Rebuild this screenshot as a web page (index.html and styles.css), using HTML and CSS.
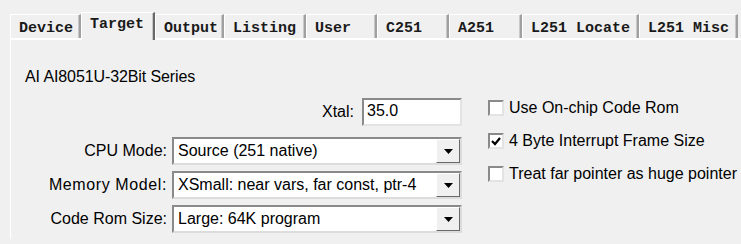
FILE: index.html
```html
<!DOCTYPE html>
<html lang="en">
<head>
    <meta charset="UTF-8">
    <meta name="viewport" content="width=device-width, initial-scale=1.0">
    <title>Options for Target</title>
    <link rel="stylesheet" href="styles.css">
</head>
<body>
    <div class="tabs">
        <div class="tab w-device">Device</div>
        <div class="tab tab-active w-target">Target</div>
        <div class="tab w-output">Output</div>
        <div class="tab w-listing">Listing</div>
        <div class="tab w-user">User</div>
        <div class="tab w-c251">C251</div>
        <div class="tab w-a251">A251</div>
        <div class="tab w-locate">L251 Locate</div>
        <div class="tab w-misc">L251 Misc</div>
    </div>

    <div class="panel">
        <div class="series">AI AI8051U-32Bit Series</div>

        <div class="panel-body">
            <div class="form">
                <div class="xtal-row">
                    <label class="field-label">Xtal:</label>
                    <div class="edit">35.0</div>
                </div>

                <div class="field-row">
                    <label class="field-label">CPU Mode:</label>
                    <div class="combo">
                        <span class="combo-text">Source (251 native)</span>
                        <span class="combo-btn"><svg width="9" height="5" viewBox="0 0 9 5"><path d="M0 0h9L4.5 5z" fill="#000"/></svg></span>
                    </div>
                </div>

                <div class="field-row">
                    <label class="field-label wide">Memory Model:</label>
                    <div class="combo">
                        <span class="combo-text">XSmall: near vars, far const, ptr-4</span>
                        <span class="combo-btn"><svg width="9" height="5" viewBox="0 0 9 5"><path d="M0 0h9L4.5 5z" fill="#000"/></svg></span>
                    </div>
                </div>

                <div class="field-row">
                    <label class="field-label">Code Rom Size:</label>
                    <div class="combo">
                        <span class="combo-text">Large: 64K program</span>
                        <span class="combo-btn"><svg width="9" height="5" viewBox="0 0 9 5"><path d="M0 0h9L4.5 5z" fill="#000"/></svg></span>
                    </div>
                </div>
            </div>

            <div class="options">
                <div class="option"><span class="check"></span>Use On-chip Code Rom</div>
                <div class="option"><span class="check"><svg width="10" height="9" viewBox="0 0 10 9"><path d="M1 4l3 3 5-6" fill="none" stroke="#000" stroke-width="2.2"/></svg></span>4 Byte Interrupt Frame Size</div>
                <div class="option"><span class="check"></span>Treat far pointer as huge pointer</div>
            </div>
        </div>
    </div>
</body>
</html>
```

FILE: styles.css
```css
body {
    margin: 0;
    width: 741px;
    height: 244px;
    overflow: hidden;
    background-color: #f0f0f0;
    font-family: "Liberation Sans", Arial, sans-serif;
    font-size: 16px;
    color: #000;
}

/* tab strip */
.tabs {
    display: flex;
    align-items: flex-end;
    padding: 14px 0 0 10px;
    height: 24px;
}

.tab {
    box-sizing: border-box;
    height: 24px;
    padding: 5px 0 0 8px;
    font-family: "Liberation Mono", "Courier New", monospace;
    font-size: 15px;
    font-weight: bold;
    line-height: 18px;
    color: #1a1a1a;
    white-space: pre;
    border-top: 1px solid #fff;
    border-left: 1px solid #fff;
    border-right: 2px solid #a0a0a0;
    box-shadow: inset -1px 0 0 #c8c8c8;
}

.tab-active {
    height: 28px;
    margin-bottom: -2px;
    padding-top: 3px;
    background-color: #f0f0f0;
    position: relative;
    z-index: 1;
    border-right-color: #696969;
}

.w-device { width: 71px; }
.w-target { width: 74px; }
.w-output { width: 69px; }
.w-listing { width: 82px; }
.w-user { width: 71px; }
.w-c251 { width: 72px; }
.w-a251 { width: 73px; }
.w-locate { width: 117px; }
.w-misc { width: 99px; }

/* page */
.panel {
    margin-left: 10px;
    border-top: 2px solid #fff;
    border-left: 1px solid #fff;
    padding: 28px 0 0 14px;
}

.series {
    line-height: 18px;
    letter-spacing: -0.1px;
}

.panel-body {
    display: flex;
    margin-top: 12px;
}

.form {
    width: 437px;
}

.xtal-row {
    display: flex;
    justify-content: flex-end;
    align-items: center;
    margin-bottom: 11px;
}

.xtal-row .field-label {
    margin-right: 8px;
}

.field-row {
    display: grid;
    grid-template-columns: 142px 290px;
    column-gap: 5px;
    align-items: center;
    margin-bottom: 6px;
}

.field-label {
    text-align: right;
    white-space: nowrap;
}

.field-label.wide {
    letter-spacing: 0.6px;
}

.edit {
    box-sizing: border-box;
    width: 100px;
    height: 28px;
    padding: 2px 3px;
    background-color: #fff;
    border-top: 2px solid #8a8a8a;
    border-left: 2px solid #8a8a8a;
    border-right: 2px solid #e3e3e3;
    border-bottom: 2px solid #e3e3e3;
}

.combo {
    box-sizing: border-box;
    display: flex;
    height: 28px;
    background-color: #fff;
    border-top: 2px solid #8a8a8a;
    border-left: 2px solid #8a8a8a;
    border-right: 2px solid #dcdcdc;
    border-bottom: 2px solid #dcdcdc;
}

.combo-text {
    flex: 1;
    padding-left: 4px;
    line-height: 24px;
    white-space: nowrap;
    overflow: hidden;
}

.combo-btn {
    box-sizing: border-box;
    width: 24px;
    display: flex;
    align-items: center;
    justify-content: center;
    background-color: #f0f0f0;
    border-top: 1px solid #fff;
    border-left: 1px solid #fff;
    border-right: 1px solid #696969;
    border-bottom: 1px solid #696969;
}

/* checkboxes */
.options {
    margin-left: 26px;
}

.option {
    display: flex;
    align-items: center;
    height: 20px;
    margin-bottom: 13px;
    white-space: nowrap;
}

.check {
    box-sizing: border-box;
    width: 16px;
    height: 16px;
    margin-right: 5px;
    display: flex;
    align-items: center;
    justify-content: center;
    background-color: #fff;
    border-top: 2px solid #8a8a8a;
    border-left: 2px solid #8a8a8a;
    border-right: 2px solid #e3e3e3;
    border-bottom: 2px solid #e3e3e3;
}
```
